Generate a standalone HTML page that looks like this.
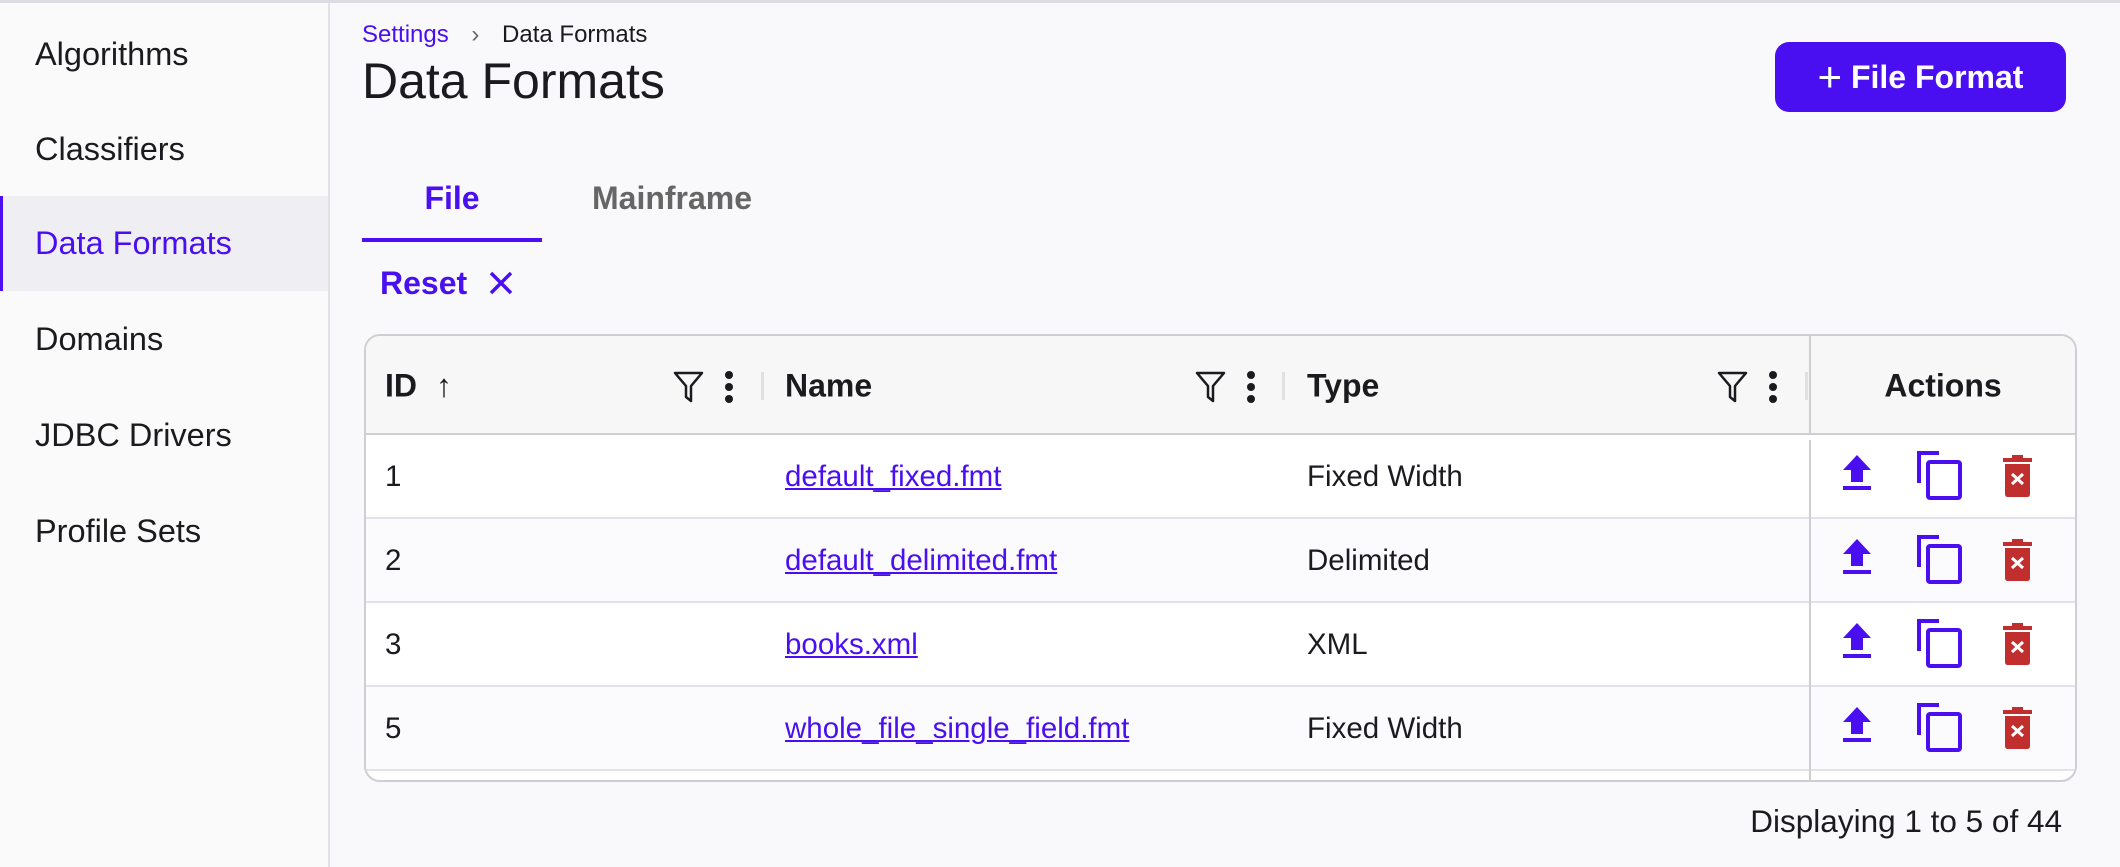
<!DOCTYPE html>
<html><head><style>
*{box-sizing:border-box;margin:0;padding:0}
body{width:2120px;height:867px;overflow:hidden;background:#f9f9fb;font-family:"Liberation Sans",sans-serif;color:#1b1b1f;position:relative}
.top{position:absolute;left:0;top:0;width:2120px;height:3px;background:#dcdce2}
.side{position:absolute;left:0;top:3px;width:330px;height:864px;background:#fafafb;border-right:2px solid #e2e2e6}
.si{position:absolute;left:0;width:328px;height:95px;line-height:95px;padding-left:35px;font-size:32.5px;color:#1b1b1f}
.si.act{background:#efeef3;color:#4a0ff0;border-left:3px solid #4a0ff0;padding-left:32px}
.a{position:absolute;white-space:nowrap}
.btn{position:absolute;left:1775px;top:42px;width:291px;height:70px;background:#4a0ff0;border-radius:14px;color:#fff;font-weight:bold;font-size:32px;line-height:70px;text-align:center}
.tbl{position:absolute;left:364px;top:334px;width:1713px;height:448px;border:2px solid #cfcfd3;border-radius:16px;overflow:hidden;background:#fff}
.hd{position:absolute;left:0;top:0;width:100%;height:99px;background:#f7f7f8;border-bottom:2px solid #cfcfd3}
.row{position:absolute;left:0;width:100%;height:84px;border-bottom:2px solid #e2e2ea}
.ht{position:absolute;top:50px;transform:translateY(-50%);font-weight:bold;font-size:32px}
.ct{position:absolute;top:42px;transform:translateY(-50%);font-size:29.5px}
.lk{color:#4a0ff0;text-decoration:underline}
.vl{position:absolute;left:1443px;top:0;width:2px;height:100%;background:#cfcfd3}
.sep{position:absolute;top:36px;width:3px;height:28px;background:#e0e0e2}
</style></head><body>
<div class="top"></div>
<div class="side">
<div class="si" style="top:4px">Algorithms</div>
<div class="si" style="top:99px">Classifiers</div>
<div class="si act" style="top:193px">Data Formats</div>
<div class="si" style="top:289px">Domains</div>
<div class="si" style="top:385px">JDBC Drivers</div>
<div class="si" style="top:481px">Profile Sets</div>
</div>
<div class="a" style="left:362px;top:21px;font-size:24px"><span style="color:#4a0ff0">Settings</span> <span style="color:#666;margin:0 16px">›</span> Data Formats</div>
<div class="a" style="left:362px;top:52px;font-size:50px">Data Formats</div>
<div class="btn"><span style="font-weight:normal;font-size:42px;vertical-align:-3px">+</span> File Format</div>
<div class="a" style="left:362px;top:180px;width:180px;text-align:center;font-weight:bold;font-size:32px;color:#4a0ff0">File</div>
<div class="a" style="left:362px;top:238px;width:180px;height:4px;background:#4a0ff0"></div>
<div class="a" style="left:592px;top:180px;font-weight:bold;font-size:32px;color:#666">Mainframe</div>
<div class="a" style="left:380px;top:265px;font-weight:bold;font-size:32px;color:#4a0ff0">Reset</div>
<svg class="a" style="left:488px;top:270px" width="26" height="26" viewBox="0 0 26 26"><path d="M3 3L23 23M23 3L3 23" stroke="#4a0ff0" stroke-width="3.5"/></svg>
<div class="tbl">
<div class="hd">
<div class="ht" style="left:19px">ID <span style="font-weight:normal;margin-left:10px">↑</span></div>
<div class="ht" style="left:419px">Name</div>
<div class="ht" style="left:941px">Type</div>
<div class="ht" style="left:1443px;width:268px;text-align:center">Actions</div>
<svg class="a" style="left:306px;top:34px" width="96" height="34"><path d="M3 3H30L19 16V31L14 27V16Z" fill="none" stroke="#1b1b1f" stroke-width="2.5" stroke-linejoin="round"/><circle cx="57" cy="5" r="4" fill="#1b1b1f"/><circle cx="57" cy="17" r="4" fill="#1b1b1f"/><circle cx="57" cy="29" r="4" fill="#1b1b1f"/></svg>
<div class="sep" style="left:395px"></div>
<svg class="a" style="left:828px;top:34px" width="96" height="34"><path d="M3 3H30L19 16V31L14 27V16Z" fill="none" stroke="#1b1b1f" stroke-width="2.5" stroke-linejoin="round"/><circle cx="57" cy="5" r="4" fill="#1b1b1f"/><circle cx="57" cy="17" r="4" fill="#1b1b1f"/><circle cx="57" cy="29" r="4" fill="#1b1b1f"/></svg>
<div class="sep" style="left:916px"></div>
<svg class="a" style="left:1350px;top:34px" width="96" height="34"><path d="M3 3H30L19 16V31L14 27V16Z" fill="none" stroke="#1b1b1f" stroke-width="2.5" stroke-linejoin="round"/><circle cx="57" cy="5" r="4" fill="#1b1b1f"/><circle cx="57" cy="17" r="4" fill="#1b1b1f"/><circle cx="57" cy="29" r="4" fill="#1b1b1f"/></svg>
<div class="sep" style="left:1439px"></div>
</div>
<div class="vl" style="top:0;height:99px"></div>
<div class="row" style="top:99px"><div class="ct" style="left:19px">1</div><div class="ct lk" style="left:419px">default_fixed.fmt</div><div class="ct" style="left:941px">Fixed Width</div></div>
<div class="row" style="top:183px;background:#fbfbfd"><div class="ct" style="left:19px">2</div><div class="ct lk" style="left:419px">default_delimited.fmt</div><div class="ct" style="left:941px">Delimited</div></div>
<div class="row" style="top:267px"><div class="ct" style="left:19px">3</div><div class="ct lk" style="left:419px">books.xml</div><div class="ct" style="left:941px">XML</div></div>
<div class="row" style="top:351px;background:#fbfbfd"><div class="ct" style="left:19px">5</div><div class="ct lk" style="left:419px">whole_file_single_field.fmt</div><div class="ct" style="left:941px">Fixed Width</div></div>
<div class="vl" style="top:104px;height:340px"></div>
</div>
<svg class="a" style="left:1812px;top:438px" width="270" height="340">
<defs><g id="ic">
<path d="M45 17L59 32H51V44H39V32H31Z" fill="#4a0ff0"/><rect x="31" y="48" width="28" height="4" fill="#4a0ff0"/>
<path d="M107 45V15H127" fill="none" stroke="#4a0ff0" stroke-width="4"/><rect x="116" y="24" width="32" height="36" rx="2" fill="none" stroke="#4a0ff0" stroke-width="4"/>
<rect x="191" y="20" width="29" height="4" fill="#c12e2e"/><rect x="200" y="17" width="11" height="4" fill="#c12e2e"/><path d="M193 26H218V56Q218 59 215 59H196Q193 59 193 56Z" fill="#c12e2e"/><path d="M200 36L211 46M211 36L200 46" stroke="#fff" stroke-width="3"/>
</g></defs>
<use href="#ic" y="0"/><use href="#ic" y="84"/><use href="#ic" y="168"/><use href="#ic" y="252"/>
</svg>
<div class="a" style="right:58px;top:803px;font-size:31.5px">Displaying 1 to 5 of 44</div>
</body></html>
